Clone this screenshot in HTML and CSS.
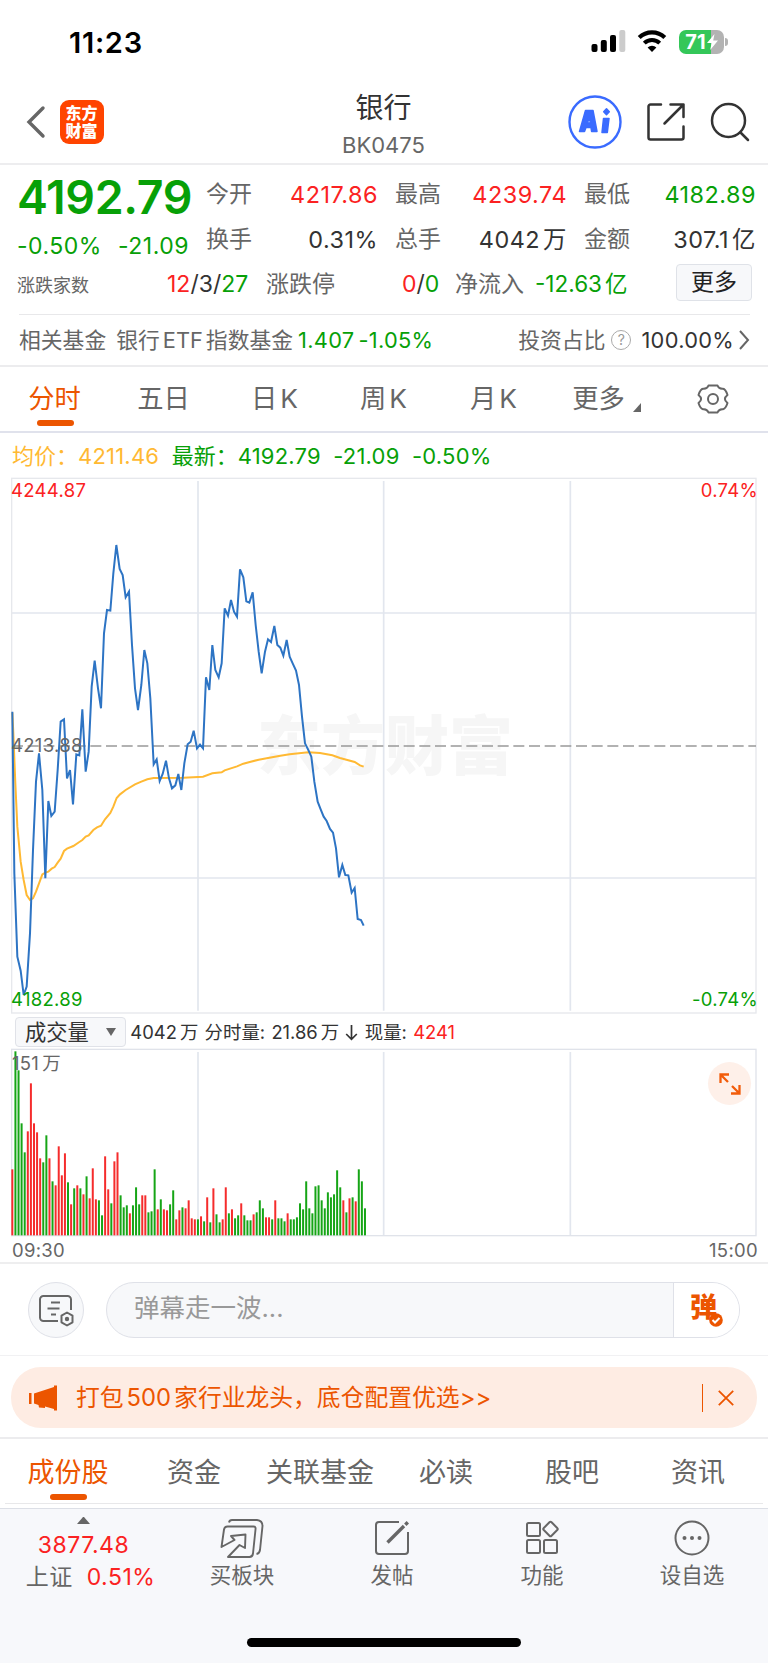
FILE: index.html
```html
<!DOCTYPE html>
<html lang="zh-CN">
<head>
  <meta charset="UTF-8">
  <title>银行 BK0475</title>
  <link rel="stylesheet" href="styles.css">
</head>
<body>

  <div class="status-bar">
    <span class="time">11:23</span>
    <svg class="signal" width="36" height="24" viewBox="0 0 36 24">
      <rect x="0.5" y="14" width="6" height="8" rx="2"/>
      <rect x="9.8" y="10" width="6" height="12" rx="2"/>
      <rect x="19" y="5" width="6" height="17" rx="2"/>
      <rect x="28.3" y="0" width="6" height="22" rx="2" fill="#ccc"/>
    </svg>
    <svg class="wifi" width="30" height="24" viewBox="0 0 30 24">
      <path d="M2.2 7.6a18.5 18.5 0 0 1 25.6 0" fill="none" stroke="#000" stroke-width="4.2"/>
      <path d="M7.3 13.1a11 11 0 0 1 15.4 0" fill="none" stroke="#000" stroke-width="4"/>
      <path d="M15 22l-4.4-4.4a6.4 6.4 0 0 1 8.8 0z"/>
    </svg>
    <div class="battery">
      <span>71</span>
      <svg width="11" height="16" viewBox="0 0 11 16"><path d="M7.5 0L0 9h4.6L3.2 16 11 6.600H6.200z" fill="#fff"/></svg>
    </div>
    <i class="battery-tip"></i>
  </div>

  <header class="header">
    <div class="header-left">
      <svg width="20" height="34" viewBox="0 0 20 34"><path d="M17 3L3 17l14 14" fill="none" stroke="#666" stroke-width="3.4" stroke-linecap="round"/></svg>
      <div class="logo">东方<br>财富</div>
    </div>
    <div class="title">
      <h1>银行</h1>
      <span>BK0475</span>
    </div>
    <div class="header-right">
      <svg width="54" height="54" viewBox="0 0 54 54">
        <circle cx="27" cy="27" r="25.500" fill="none" stroke="#3a6bff" stroke-width="2.400"/>
        <g fill="#3a6bff" stroke="#3a6bff" stroke-width="1.500" stroke-linejoin="round">
          <path fill-rule="evenodd" d="M17.500 15.500h7.500l4 21h-5.400l-.6-4h-5l-1.500 4H11.500zM21.500 21.500l-2 6.500h2.800z"/>
          <path d="M35.500 23.500h5.500l-1.700 14H34z"/>
          <path d="M38.500 13.800l2.800 3-2.800 3-2.800-3z"/>
        </g>
      </svg>
      <svg width="40" height="40" viewBox="0 0 40 40" fill="none" stroke="#333" stroke-width="2.500" stroke-linecap="round" stroke-linejoin="round">
        <path d="M15 2.500H4.500a2 2 0 0 0-2 2v31a2 2 0 0 0 2 2h31a2 2 0 0 0 2-2V24.500"/>
        <path d="M24.500 2.500h13v12.500M37.500 2.500L18.500 21.500"/>
      </svg>
      <svg width="40" height="40" viewBox="0 0 40 40" fill="none" stroke="#333" stroke-width="2.500" stroke-linecap="round">
        <circle cx="18.500" cy="18.500" r="16.500"/>
        <path d="M30.500 30.500l7.500 7.500"/>
      </svg>
    </div>
  </header>

  <section class="quote">
    <div class="quote-top">
      <div class="quote-main green">
        <div class="price">4192.79</div>
        <div class="change"><span>-0.50%</span><span>-21.09</span></div>
      </div>
      <div class="quote-grid">
        <span class="label">今开</span><span class="red">4217.86</span>
        <span class="label">最高</span><span class="red">4239.74</span>
        <span class="label">最低</span><span class="green">4182.89</span>
        <span class="label">换手</span><span>0.31%</span>
        <span class="label">总手</span><span>4042<b>万</b></span>
        <span class="label">金额</span><span>307.1<b>亿</b></span>
      </div>
    </div>
    <div class="quote-extra">
      <span class="label small">涨跌家数</span>
      <span class="updown"><em class="red">12</em>/3/<em class="green">27</em></span>
      <span class="label">涨跌停</span>
      <span class="limit"><em class="red">0</em>/<em class="green">0</em></span>
      <span class="label">净流入</span>
      <span class="inflow green">-12.63<b>亿</b></span>
      <button class="more-btn">更多</button>
    </div>
    <div class="fund">
      <span class="fund-label">相关基金</span>
      <span class="fund-name">银行<b>ETF</b>指数基金</span>
      <span class="fund-price green">1.407</span>
      <span class="fund-rate green">-1.05%</span>
      <span class="fund-ratio">投资占比</span>
      <i class="help">?</i>
      <span class="fund-percent">100.00%</span>
      <svg width="12" height="22" viewBox="0 0 12 22"><path d="M2 2l8 9-8 9" fill="none" stroke="#666" stroke-width="2"/></svg>
    </div>
  </section>

  <nav class="period-tabs">
    <a class="active">分时</a>
    <a>五日</a>
    <a>日<b>K</b></a>
    <a>周<b>K</b></a>
    <a>月<b>K</b></a>
    <a class="more">更多</a>
    <svg width="32" height="30" viewBox="0 0 32 30" fill="none" stroke="#666" stroke-width="2">
      <path d="M11.500 1.500h9q1.500 3.800 5.500 3.300 2.600.3 4.500 6.200-2.600 2-2.600 4t2.600 4q-1.900 5.900-4.500 6.200-4-.5-5.500 3.300h-9q-1.500-3.800-5.500-3.300-2.600-.3-4.500-6.200 2.600-2 2.600-4t-2.600-4q1.900-5.900 4.500-6.200 4 .5 5.500-3.300z" stroke-linejoin="round"/>
      <circle cx="16" cy="15" r="5"/>
    </svg>
  </nav>

  <div class="legend">
    <span class="avg">均价：</span><span class="avg num">4211.46</span>
    <span class="green">最新：</span><span class="green num">4192.79</span><span class="green num">-21.09</span><span class="green num">-0.50%</span>
  </div>

  <div class="chart">
    <span class="watermark">东方财富</span>
    <svg width="768" height="540" viewBox="0 0 2304 1620">
      <g fill="none" stroke="#e2e6ee" stroke-width="5">
        <path d="M594 15V1604M1151 15V1604M1711 15V1604M36 411H2268M36 1206H2268"/>
        <rect x="35" y="7" width="2233" height="1604" stroke="#e6e8ec" stroke-width="4"/>
      </g>
      <path d="M36 810H2268" stroke="#999" stroke-width="5" stroke-dasharray="33 14"/>
      <polyline transform="translate(0 -18)" fill="none" stroke="#ffb933" stroke-width="6" points="37,728 40,790 46,940 52,1070 62,1175 71,1230 80,1275 90,1290 99,1285 108,1265 127,1213 136,1208 145,1205 155,1196 164,1191 173,1178 182,1166 192,1143 201,1136 220,1128 238,1116 247,1110 257,1100 266,1096 280,1080 291,1072 303,1067 315,1048 331,1029 340,1010 350,984 360,973 377,960 405,943 424,935 442,928 461,924 550,923 609,920 637,910 665,907 674,901 711,889 730,881 776,869 804,864 841,857 869,853 925,847 960,849 997,856 1020,864 1064,876 1080,886 1091,890"/>
      <polyline transform="translate(0 -18)" fill="none" stroke="#2d74c4" stroke-width="6" points="37,725 43,1210 52,1460 62,1502 71,1575 80,1550 90,1390 99,1140 108,935 117,850 127,960 136,1225 145,993 154,1038 164,1025 173,900 182,755 192,748 201,925 210,900 219,1003 229,853 238,856 247,718 257,905 266,845 275,650 284,572 294,655 303,715 312,490 321,420 331,422 340,310 349,225 359,297 368,315 377,382 387,365 396,525 405,655 414,720 424,645 433,540 442,580 451,685 461,883 470,868 479,933 488,912 498,872 507,925 516,955 526,946 535,912 544,960 553,880 563,823 572,815 581,782 591,835 600,824 609,835 618,622 628,660 637,525 646,600 656,622 665,580 674,415 684,437 693,390 702,425 711,440 720,298 730,322 739,394 748,398 758,367 767,465 776,545 785,610 795,545 804,508 813,516 823,468 832,525 841,533 850,557 860,510 869,560 878,580 888,602 897,645 906,740 915,820 925,840 934,860 943,935 953,995 962,1018 971,1040 980,1053 990,1077 999,1088 1008,1135 1017,1222 1027,1185 1036,1215 1045,1216 1055,1268 1064,1254 1073,1347 1083,1350 1091,1367"/>
    </svg>
    <span class="axis top-left red">4244.87</span>
    <span class="axis top-right red">0.74%</span>
    <span class="axis middle">4213.88</span>
    <span class="axis bottom-left green">4182.89</span>
    <span class="axis bottom-right green">-0.74%</span>
  </div>

  <div class="volume-bar">
    <div class="select">成交量<i></i></div>
    <span>4042<b>万</b></span>
    <span>分时量:</span>
    <span>21.86<b>万</b></span>
    <svg width="13" height="17" viewBox="0 0 13 17"><path d="M6.500 1v14M1.200 10l5.300 5.300L11.800 10" fill="none" stroke="#333" stroke-width="1.700"/></svg>
    <span>现量:</span>
    <span class="red">4241</span>
  </div>

  <div class="chart volume">
    <svg width="768" height="190" viewBox="0 0 2304 570">
      <path d="M594 12V562M1151 12V562M1711 12V562" stroke="#e2e6ee" stroke-width="5"/>
      <rect x="35" y="4" width="2233" height="559" fill="none" stroke="#e0e3ea" stroke-width="4"/>
      <g id="bars"></g>
    </svg>
    <span class="axis max-vol">151<b>万</b></span>
    <span class="expand">
      <svg width="22" height="22" viewBox="0 0 22 22" fill="none" stroke="#f25c0a" stroke-width="2.300">
        <path d="M1.500 10V1.500H10M1.500 1.500l7.500 7.500M20.500 12v8.500H12M20.500 20.500l-7.500-7.500"/>
      </svg>
    </span>
  </div>
  <div class="times"><span>09:30</span><span>15:00</span></div>

  <div class="danmu">
    <div class="danmu-set">
      <svg width="36" height="34" viewBox="0 0 36 34" fill="none" stroke="#666" stroke-width="2">
        <path d="M20 28H5.500A3.500 3.500 0 0 1 2 24.500V6.500A3.500 3.500 0 0 1 5.500 3h24A3.500 3.500 0 0 1 33 6.500V17"/>
        <path d="M13 9.500h9M9.500 15.500h12M13 21.500h5"/>
        <path d="M29 19.500l5.500 3.200v6.600L29 32.500l-5.500-3.200v-6.600z" stroke-linejoin="round"/>
        <circle cx="29" cy="26" r="1.200" fill="#666"/>
      </svg>
    </div>
    <div class="danmu-input">
      <span>弹幕走一波...</span>
      <div class="danmu-send">弹
        <svg width="14" height="14" viewBox="0 0 14 14"><circle cx="7" cy="7" r="6.800" fill="#ec5500"/><path d="M3.500 7l2.500 2.500 4.500-4.500" fill="none" stroke="#fff" stroke-width="2"/></svg>
      </div>
    </div>
  </div>

  <div class="banner-wrap">
    <div class="banner">
      <svg width="30" height="26" viewBox="0 0 30 26" fill="#ec5500">
        <path d="M1 8h2.500v11H1zM6 8.500L26 2V.5h3v25h-3V24l-9-2.500V23l-6-.5L10.500 20 6 18.500z"/>
      </svg>
      <span class="banner-text">打包<b>500</b>家行业龙头，底仓配置优选&gt;&gt;</span>
      <i class="sep"></i>
      <svg width="16" height="16" viewBox="0 0 16 16"><path d="M.8.8l14.400 14.400M15.200.8L.8 15.200" stroke="#ec5500" stroke-width="1.800"/></svg>
    </div>
  </div>

  <nav class="info-tabs">
    <a class="active">成份股</a>
    <a>资金</a>
    <a>关联基金</a>
    <a>必读</a>
    <a>股吧</a>
    <a>资讯</a>
  </nav>

  <footer class="bottom">
    <div class="index">
      <i></i>
      <div class="red">3877.48</div>
      <div class="index-name"><span>上证</span><span class="red">0.51%</span></div>
    </div>
    <div class="action">
      <svg width="44" height="40" viewBox="0 0 44 40" fill="none" stroke="#666" stroke-width="1.900" stroke-linejoin="round">
        <path d="M9 4.500Q9.500 2 12 2h25Q42.500 2.500 42.500 8L40 32q-.5 3.500-3.500 4"/>
        <path d="M1.500 29L4 11.500Q4.500 8.500 7.500 8.500h26Q36 8.500 35.500 11.500L33 35.500Q32.500 39 29.500 39H8L19.500 27l5.500 3 .5-13.500L11 18l3.500 4z"/>
      </svg>
      <span>买板块</span>
    </div>
    <div class="action">
      <svg width="36" height="36" viewBox="0 0 36 36" fill="none" stroke="#666" stroke-width="2">
        <path d="M25 2H5a3 3 0 0 0-3 3v26a3 3 0 0 0 3 3h26a3 3 0 0 0 3-3V12"/>
        <path d="M13.500 22.500L30 6" stroke-width="3.400"/><path d="M31.300 4.700L33.800 2.200" stroke-width="3.400"/>
      </svg>
      <span>发帖</span>
    </div>
    <div class="action">
      <svg width="36" height="36" viewBox="0 0 36 36" fill="none" stroke="#666" stroke-width="2">
        <rect x="3" y="3" width="13" height="13" rx="1.500"/>
        <rect x="3" y="20" width="13" height="13" rx="1.500"/>
        <rect x="20" y="20" width="13" height="13" rx="1.500"/>
        <rect x="21" y="3.500" width="11" height="11" rx="1.500" transform="rotate(45 26.500 9)"/>
      </svg>
      <span>功能</span>
    </div>
    <div class="action">
      <svg width="36" height="36" viewBox="0 0 36 36" fill="none" stroke="#666" stroke-width="2">
        <circle cx="18" cy="18" r="16.500"/>
        <g fill="#666" stroke="none"><circle cx="10.500" cy="18" r="2"/><circle cx="18" cy="18" r="2"/><circle cx="25.500" cy="18" r="2"/></g>
      </svg>
      <span>设自选</span>
    </div>
    <div class="home-indicator"></div>
  </footer>

  <script src="chart.js"></script>
</body>
</html>
```
FILE: styles.css
```css
* {
  box-sizing: border-box;
}

body {
  margin: 0;
  width: 768px;
  background-color: #fff;
  font-family: Inter, "Noto Sans CJK SC", sans-serif;
  color: #333;
  font-size: 23px;
}

b, em, i {
  font-weight: normal;
  font-style: normal;
}

svg {
  display: block;
  flex: none;
}

span, a {
  white-space: nowrap;
}

.red {
  color: #fb2222;
}

.green {
  color: #07a007;
}

.label {
  color: #666;
}

/* status bar */
.status-bar {
  display: flex;
  align-items: center;
  height: 82px;
  padding: 2px 0 0 69px;
}

.time {
  width: 522px;
  font-size: 29px;
  font-weight: 600;
  letter-spacing: 0.7px;
  color: #000;
}

.wifi {
  margin-left: 10px;
}

.battery {
  display: flex;
  align-items: center;
  justify-content: center;
  gap: 1px;
  width: 45px;
  height: 24px;
  margin-left: 12px;
  border-radius: 7px;
  background: linear-gradient(to right, #34c759 71%, #b3b3b3 71%);
  color: #fff;
  font-size: 20px;
  font-weight: 700;
}

.battery-tip {
  width: 3px;
  height: 8px;
  margin-left: 1px;
  border-radius: 0 4px 4px 0;
  background-color: #b3b3b3;
}

/* header */
.header {
  display: grid;
  grid-template-columns: 250px 267px 251px;
  height: 83px;
  border-bottom: 2px solid #ededef;
}

.header-left {
  display: flex;
  align-items: center;
  padding: 0 0 2px 26px;
}

.logo {
  width: 44px;
  height: 44px;
  margin-left: 13.5px;
  padding-top: 4px;
  border-radius: 9px;
  background-color: #ff4400;
  color: #fff;
  font-size: 16px;
  font-weight: 900;
  line-height: 18px;
  text-align: center;
}

.title {
  text-align: center;
}

.title h1 {
  margin: 7px 0 0;
  font-size: 28px;
  font-weight: 400;
  line-height: 38px;
}

.title span {
  display: block;
  font-size: 22px;
  line-height: 37px;
  color: #666;
}

.header-right {
  display: flex;
  align-items: center;
  gap: 24px;
  padding: 0 0 2px 51px;
}

/* quote */
.quote-top {
  display: flex;
  height: 97px;
}

.quote-main {
  width: 206px;
  padding-left: 17px;
}

.price {
  margin-top: 4px;
  font-size: 46.5px;
  font-weight: 600;
  line-height: 56px;
  letter-spacing: -0.4px;
}

.change {
  display: flex;
  justify-content: space-between;
  padding-right: 17px;
  line-height: 42px;
  letter-spacing: 0.5px;
}

.quote-grid {
  display: grid;
  grid-template-columns: 50px 122px 67px 122px 67px 122px;
  grid-template-rows: 45px 45px;
  padding-top: 7px;
  line-height: 45px;
}

.quote-grid span:nth-child(even) {
  text-align: right;
  font-size: 23.4px;
  letter-spacing: 0.5px;
}

.quote-grid .label:nth-child(n+3) {
  padding-left: 17px;
}

.quote-grid .label:nth-child(6n+1) {
  padding-left: 0;
}

b {
  margin-left: 3px;
}

.quote-extra {
  display: flex;
  align-items: center;
  height: 52px;
  padding: 0 0 9px 17px;
  line-height: 44px;
}

.quote-extra .small {
  width: 150px;
  padding-top: 5px;
  font-size: 18px;
}

.updown {
  width: 99px;
}

.limit {
  width: 53px;
  margin-left: 67px;
}

.inflow {
  width: 141px;
  margin-left: 11px;
  font-size: 22.5px;
}

.more-btn {
  width: 76px;
  height: 37px;
  margin-top: -3px;
  padding: 0;
  border: 1px solid #dfe2e8;
  border-radius: 4px;
  background-color: #f7f8fa;
  color: #222;
  font: inherit;
  line-height: 34px;
}

.fund {
  display: flex;
  align-items: center;
  height: 51px;
  margin: 0 18px 0 19px;
  border-top: 1px solid #e8e8ea;
  font-size: 21.8px;
  line-height: 30px;
  color: #666;
}

.fund-name {
  margin-left: 10px;
}

.fund-name b {
  margin: 0 3px;
}

.fund-price {
  margin-left: 5px;
  letter-spacing: 0.3px;
}

.fund-rate {
  margin-left: 4px;
  letter-spacing: 0.3px;
}

.fund-ratio {
  margin-left: auto;
}

.help {
  width: 20px;
  height: 20px;
  margin: 0 10px 0 6px;
  border: 1px solid #aaa;
  border-radius: 50%;
  font-size: 14px;
  line-height: 18px;
  text-align: center;
  color: #999;
}

.fund-percent {
  margin-right: 4px;
  letter-spacing: 0.3px;
  color: #333;
}

/* period tabs */
.period-tabs {
  display: grid;
  grid-template-columns: 109px 109px 113px 105px 115px 111px 102px;
  align-items: center;
  justify-items: center;
  height: 68px;
  border-top: 2px solid #ececee;
  border-bottom: 2px solid #e0e2ec;
  font-size: 26.3px;
  line-height: 40px;
  color: #666;
}

.active {
  position: relative;
  color: #ec5500;
}

.active::after {
  content: "";
  position: absolute;
  left: 50%;
  bottom: -7px;
  width: 37px;
  height: 6px;
  margin-left: -18px;
  border-radius: 3px;
  background-color: #ec5500;
}

.more::after {
  content: "";
  display: inline-block;
  margin: 0 0 -4px 8px;
  border-left: 8px solid transparent;
  border-bottom: 9px solid #666;
}

.legend {
  display: flex;
  align-items: center;
  height: 43px;
  padding: 2px 0 0 12px;
  font-size: 22px;
  line-height: 30px;
}

.legend .avg {
  color: #ffb933;
}

.num {
  margin-right: 12.5px;
  letter-spacing: 0.2px;
}

/* charts */
.chart {
  position: relative;
}

.chart svg {
  position: relative;
}

.axis {
  position: absolute;
  font-size: 18.5px;
  line-height: 24px;
  letter-spacing: 0.3px;
}

.axis.top-left {
  top: 2px;
  left: 11px;
}

.axis.top-right {
  top: 2px;
  right: 10px;
}

.axis.middle {
  top: 257px;
  left: 11px;
  color: #666;
}

.axis.bottom-left {
  top: 511px;
  left: 11px;
}

.axis.bottom-right {
  top: 511px;
  right: 10px;
}

.watermark {
  position: absolute;
  top: 222px;
  left: 257px;
  font-size: 64px;
  font-weight: 900;
  line-height: 96px;
  color: #f6f6f6;
}

.volume-bar {
  display: flex;
  align-items: center;
  gap: 6.3px;
  height: 32px;
  padding-left: 15px;
  font-size: 18.4px;
  line-height: 24px;
}

.select {
  display: flex;
  align-items: center;
  width: 111px;
  height: 30px;
  margin-right: -2px;
  padding-left: 9px;
  border: 1px solid #e0e2e8;
  border-radius: 4px;
  background-color: #f7f8fa;
  font-size: 21.3px;
}

.select i {
  margin-left: 17px;
  border: 5px solid transparent;
  border-top: 8px solid #666;
  border-bottom: 0;
}

.max-vol {
  top: 3px;
  left: 12px;
  color: #666;
}

.expand {
  position: absolute;
  top: 14px;
  right: 17px;
  display: flex;
  align-items: center;
  justify-content: center;
  width: 43px;
  height: 43px;
  border-radius: 50%;
  background-color: #fef0e9;
}

.times {
  display: flex;
  justify-content: space-between;
  height: 26px;
  padding: 0 10px 0 12px;
  border-bottom: 2px solid #eeeeef;
  font-size: 18.5px;
  line-height: 25px;
  letter-spacing: 0.3px;
  color: #666;
}

/* danmu */
.danmu {
  display: flex;
  align-items: center;
  height: 92px;
  padding-left: 28px;
  border-bottom: 1px solid #f1f1f3;
}

.danmu-set {
  display: flex;
  align-items: center;
  justify-content: center;
  width: 56px;
  height: 56px;
  border: 1px solid #dfe1e8;
  border-radius: 50%;
  background-color: #f7f8fa;
}

.danmu-input {
  display: flex;
  justify-content: space-between;
  width: 634px;
  height: 56px;
  margin-left: 22px;
  padding-left: 27px;
  border: 1px solid #dfe1e8;
  border-radius: 28px;
  background-color: #f7f8fa;
  overflow: hidden;
  font-size: 25.5px;
  line-height: 50px;
  color: #999;
}

.danmu-send {
  position: relative;
  width: 66px;
  padding-left: 16px;
  border-left: 1px solid #dfe1e8;
  background-color: #fff;
  color: #ec5500;
  font-size: 27px;
  font-weight: 900;
}

.danmu-send svg {
  position: absolute;
  top: 30px;
  left: 35px;
}

/* banner */
.banner-wrap {
  height: 83px;
  padding: 11px 11px 0;
  border-bottom: 2px solid #ececee;
}

.banner {
  display: flex;
  align-items: center;
  height: 61px;
  padding: 0 23px 0 17px;
  border-radius: 30px;
  background-color: #feece3;
  color: #ec5500;
  font-size: 23.8px;
}

.banner-text {
  margin: 0 auto 0 18px;
  line-height: 34px;
}

.banner-text b {
  margin: 0 3px;
}

.sep {
  width: 1px;
  height: 28px;
  margin-right: 15px;
  background-color: #ec5500;
}

/* info tabs */
.info-tabs {
  display: grid;
  grid-template-columns: repeat(6, 126px);
  align-items: center;
  justify-items: center;
  height: 65px;
  margin: 0 5px;
  padding-top: 4px;
  border-bottom: 1px solid #e8e8ea;
  font-size: 27px;
  line-height: 40px;
  color: #666;
}

/* bottom bar */
.bottom {
  display: grid;
  grid-template-columns: 167px 150px 150px 150px 150px;
  grid-template-rows: 1fr 25px;
  height: 155px;
  margin-top: 4px;
  border-top: 1px solid #dcdfe6;
  background-color: #f7f8fb;
  color: #666;
}

.index {
  text-align: center;
  line-height: 32px;
  letter-spacing: 0.5px;
}

.index i {
  display: block;
  width: 13px;
  margin: 8px auto 5px;
  border: 6.5px solid transparent;
  border-bottom: 7px solid #666;
  border-top: 0;
}

.index-name {
  padding-left: 14px;
}

.index span + span {
  margin-left: 14px;
}

.action {
  display: flex;
  flex-direction: column;
  align-items: center;
  font-size: 21.5px;
}

.action svg {
  height: 40px;
  margin-top: 9px;
}

.action span {
  line-height: 34px;
}

.home-indicator {
  grid-column: 1 / -1;
  width: 274px;
  height: 9px;
  margin-left: 247px;
  border-radius: 5px;
  background-color: #000;
}
```
FILE: chart.js
```js
// volume per minute, r = up, g = down
const volumes = 'r66 g184 g165 g112 g83 r104 r152 r112 r103 r77 g73 g100 r77 g54 r50 r89 r60 r82 g53 r31 g47 r50 g47 r41 g59 r37 r67 r36 g35 g20 r79 r46 g32 r74 r83 g40 g28 g30 r22 g30 g48 g31 r40 r40 g23 g24 g66 r26 g36 r26 r25 g31 g45 r16 r25 g28 r27 r35 r17 r16 g16 r19 g14 r38 g13 r47 g21 g13 r16 r48 g22 r26 g17 g20 r32 g20 g15 g15 r21 g23 g35 g27 r18 r18 g16 r35 g17 g17 g14 r22 g16 g16 g18 g32 g26 g54 g27 g22 g49 g50 g35 g27 g43 g38 g41 g65 g48 r35 g23 r37 g38 r34 g66 g54 g27';

const bars = document.getElementById('bars');

volumes.split(' ').forEach((item, i) => {
  const height = Number(item.slice(1)) * 3;
  const bar = document.createElementNS('http://www.w3.org/2000/svg', 'rect');
  bar.setAttribute('x', (34 + i * 9.28).toFixed(1));
  bar.setAttribute('y', 562 - height);
  bar.setAttribute('width', 6);
  bar.setAttribute('height', height);
  bar.setAttribute('fill', item[0] === 'r' ? '#f52c2c' : '#16a516');
  bars.appendChild(bar);
});
```
